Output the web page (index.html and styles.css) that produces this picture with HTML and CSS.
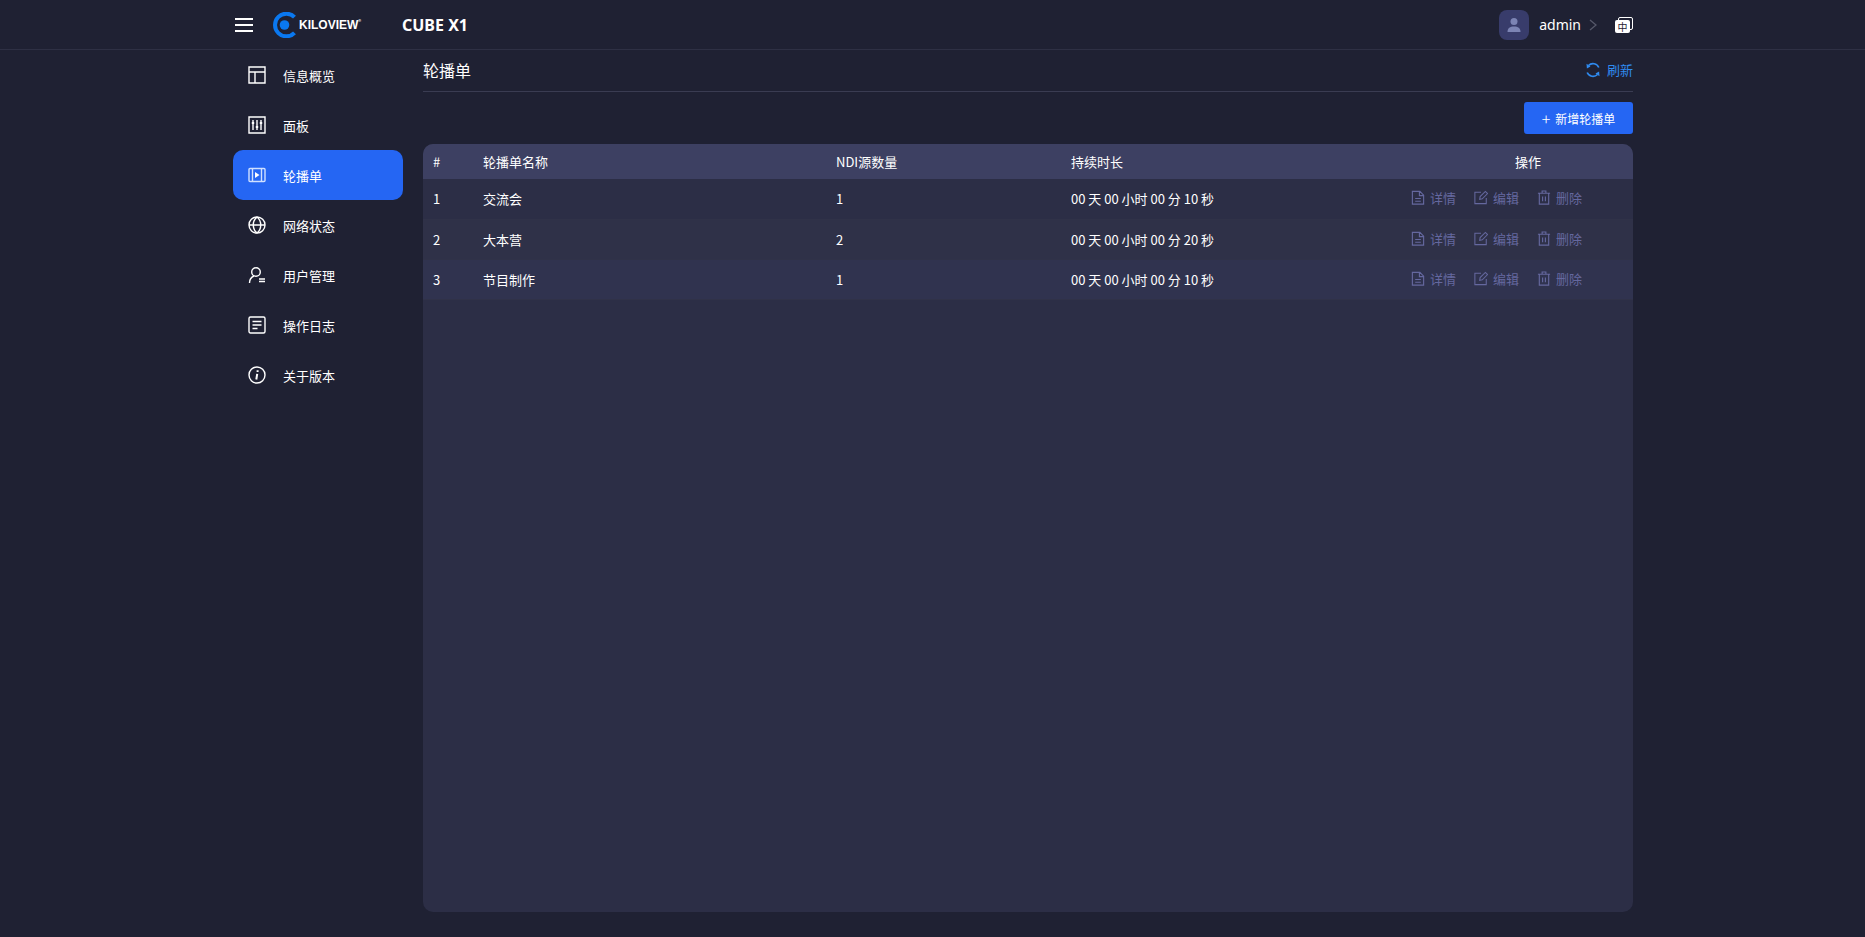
FILE: index.html
```html
<!DOCTYPE html>
<html lang="zh-CN">
<head>
    <meta charset="UTF-8">
    <title>CUBE X1</title>
    <link rel="stylesheet" href="styles.css">
</head>
<body>
    <header class="topbar">
        <div class="topbar-in">
            <svg class="burger" width="18" height="16" viewBox="0 0 18 16"><path d="M0 2h18M0 8h18M0 14h18" stroke="#fff" stroke-width="2.2"/></svg>
            <div class="logo">
                <svg width="26" height="26" viewBox="0 0 26 26"><path d="M23.5 5.2A11.3 11.3 0 1 0 23.5 20.8" fill="none" stroke="#0a78f0" stroke-width="4"/><circle cx="13.500" cy="13" r="4.800" fill="#0a78f0"/></svg>
                <span class="logo-text">KILOVIEW</span><span class="logo-r">®</span>
            </div>
            <span class="product">CUBE X1</span>
            <div class="user">
                <span class="avatar"><svg width="16" height="16" viewBox="0 0 16 16" fill="#7c84b4"><circle cx="8" cy="4.500" r="3.500"/><path d="M1.500 15c0-4 2.500-5.500 6.500-5.500s6.500 1.500 6.500 5.500z"/></svg></span>
                <span class="username">admin</span>
                <svg class="chev" width="8" height="12" viewBox="0 0 8 12"><path d="M1 1l6 5-6 5" fill="none" stroke="#56586a" stroke-width="1.300"/></svg>
                <span class="lang"><span class="lang-back"></span><span class="lang-front">中</span></span>
            </div>
        </div>
    </header>
    <div class="wrap">
        <nav class="side">
            <a class="nav-item">
                <svg class="nav-ico" viewBox="0 0 18 18"><path d="M1 1h16v16H1zM1 6h16M7 6v11"/></svg>信息概览
            </a>
            <a class="nav-item">
                <svg class="nav-ico" viewBox="0 0 18 18"><path d="M1 1h16v16H1zM5 4v10M9 4v10M13 4v10"/><path class="dot" d="M3.800 6h2.400v2H3.800zM7.800 10h2.400v2H7.800zM11.800 6h2.400v2h-2.400z"/></svg>面板
            </a>
            <a class="nav-item active">
                <svg class="nav-ico" viewBox="0 0 18 14"><path stroke="#cfe0ff" d="M1 1.500a1 1 0 0 1 1-1h14a1 1 0 0 1 1 1v11a1 1 0 0 1-1 1H2a1 1 0 0 1-1-1zM4.500 1v12M13.500 1v12"/><path class="dot" fill="#fff" d="M7 4l4.500 3L7 10z"/></svg>轮播单
            </a>
            <a class="nav-item">
                <svg class="nav-ico" viewBox="0 0 18 18"><circle cx="9" cy="9" r="8"/><path d="M1 9h16M9 1c-5 4-5 12 0 16M9 1c5 4 5 12 0 16"/></svg>网络状态
            </a>
            <a class="nav-item">
                <svg class="nav-ico" viewBox="0 0 18 18"><circle cx="8" cy="6" r="4.300"/><path d="M1.500 17c0-4 2-6 4.500-7M11 13h6M11 15.500h6"/></svg>用户管理
            </a>
            <a class="nav-item">
                <svg class="nav-ico" viewBox="0 0 18 18"><path d="M2.500 1h13A1.500 1.500 0 0 1 17 2.500v13a1.500 1.500 0 0 1-1.500 1.500h-13A1.500 1.500 0 0 1 1 15.500v-13A1.500 1.500 0 0 1 2.500 1zM4.500 5.500h9M4.500 9h9M4.500 12.500h5"/></svg>操作日志
            </a>
            <a class="nav-item">
                <svg class="nav-ico" viewBox="0 0 18 18"><circle cx="9" cy="9" r="8"/><path stroke-width="2" d="M9.600 4.300v1.600M9.200 7.800L8.300 13.500"/></svg>关于版本
            </a>
        </nav>
        <main class="main">
            <div class="title-row">
                <h1 class="title">轮播单</h1>
                <a class="refresh">
                    <svg width="16" height="16" viewBox="0 0 16 16" fill="none" stroke="#2f8bf0" stroke-width="1.700"><path d="M13.800 5.500A6.300 6.300 0 0 0 3.500 3.500M2.200 10.500A6.300 6.300 0 0 0 12.500 12.500"/><path fill="#2f8bf0" stroke="none" d="M1.500 1.800l4 2.600-3.600 2zM14.500 14.200l-4-2.600 3.600-2z"/></svg>
                    刷新
                </a>
            </div>
            <div class="tool-row">
                <button class="add-btn"><span class="plus">+</span>新增轮播单</button>
            </div>
            <div class="panel">
                <table class="list">
                    <thead>
                        <tr>
                            <th class="c-no">#</th>
                            <th class="c-name">轮播单名称</th>
                            <th class="c-num">NDI源数量</th>
                            <th class="c-time">持续时长</th>
                            <th class="c-op">操作</th>
                        </tr>
                    </thead>
                    <tbody>
                        <tr>
                            <td>1</td>
                            <td>交流会</td>
                            <td>1</td>
                            <td>00 天 00 小时 00 分 10 秒</td>
                            <td class="ops">
                                <a><svg class="op-ico" viewBox="0 0 14 16"><path d="M1 1.500h8l4 4v9.500H1zM8.500 1.500V6H13M4 9h6M4 12h6"/></svg>详情</a>
                                <a><svg class="op-ico" viewBox="0 0 16 16"><path d="M14 8.500V15H1V2h7M6.500 10l.5-3 6-6 2.500 2.500-6 6z"/></svg>编辑</a>
                                <a><svg class="op-ico" viewBox="0 0 14 16"><path d="M0.500 3.500h13M5 3.500V1h4v2.500M2 3.500V15h10V3.500M5.500 7v5M8.500 7v5"/></svg>删除</a>
                            </td>
                        </tr>
                        <tr>
                            <td>2</td>
                            <td>大本营</td>
                            <td>2</td>
                            <td>00 天 00 小时 00 分 20 秒</td>
                            <td class="ops">
                                <a><svg class="op-ico" viewBox="0 0 14 16"><path d="M1 1.500h8l4 4v9.500H1zM8.500 1.500V6H13M4 9h6M4 12h6"/></svg>详情</a>
                                <a><svg class="op-ico" viewBox="0 0 16 16"><path d="M14 8.500V15H1V2h7M6.500 10l.5-3 6-6 2.500 2.500-6 6z"/></svg>编辑</a>
                                <a><svg class="op-ico" viewBox="0 0 14 16"><path d="M0.500 3.500h13M5 3.500V1h4v2.500M2 3.500V15h10V3.500M5.500 7v5M8.500 7v5"/></svg>删除</a>
                            </td>
                        </tr>
                        <tr>
                            <td>3</td>
                            <td>节目制作</td>
                            <td>1</td>
                            <td>00 天 00 小时 00 分 10 秒</td>
                            <td class="ops">
                                <a><svg class="op-ico" viewBox="0 0 14 16"><path d="M1 1.500h8l4 4v9.500H1zM8.500 1.500V6H13M4 9h6M4 12h6"/></svg>详情</a>
                                <a><svg class="op-ico" viewBox="0 0 16 16"><path d="M14 8.500V15H1V2h7M6.500 10l.5-3 6-6 2.500 2.500-6 6z"/></svg>编辑</a>
                                <a><svg class="op-ico" viewBox="0 0 14 16"><path d="M0.500 3.500h13M5 3.500V1h4v2.500M2 3.500V15h10V3.500M5.500 7v5M8.500 7v5"/></svg>删除</a>
                            </td>
                        </tr>
                    </tbody>
                </table>
            </div>
        </main>
    </div>
</body>
</html>
```

FILE: styles.css
```css
* {
    box-sizing: border-box;
}
html, body {
    margin: 0;
    height: 100%;
}
body {
    background-color: #1f2133;
    color: #fff;
    font-family: "Noto Sans CJK SC", "Noto Sans", sans-serif;
    font-size: 14px;
    overflow: hidden;
}
.topbar {
    height: 50px;
    border-bottom: 1px solid #2e3044;
}
.topbar-in {
    width: 1400px;
    margin: 0 auto;
    padding-left: 235px;
    padding-right: 0;
    display: flex;
    align-items: center;
    height: 49px;
    width: 100%;
    padding-right: 232px;
}
.burger {
    margin-right: 18px;
}
.logo {
    display: flex;
    align-items: center;
    width: 131px;
}
.logo-text {
    font-family: "Liberation Sans", sans-serif;
    font-size: 12px;
    font-weight: 700;
    margin-left: 2px;
}
.logo-r {
    font-size: 6px;
    margin-bottom: 6px;
}
.product {
    font-family: "Noto Sans", sans-serif;
    font-size: 16px;
    font-weight: 700;
}
.user {
    margin-left: auto;
    display: flex;
    align-items: center;
}
.avatar {
    width: 30px;
    height: 30px;
    border-radius: 8px;
    background-color: #383c6b;
    display: flex;
    align-items: center;
    justify-content: center;
}
.username {
    font-family: "Noto Sans", sans-serif;
    font-size: 14px;
    margin-left: 10px;
}
.chev {
    margin-left: 8px;
}
.lang {
    position: relative;
    width: 18px;
    height: 16px;
    margin-left: 18px;
}
.lang-back {
    position: absolute;
    top: 0;
    right: 0;
    width: 15px;
    height: 13px;
    border: 1px solid #fff;
    border-radius: 2px;
}
.lang-front {
    position: absolute;
    left: 0;
    bottom: 0;
    width: 15px;
    height: 13px;
    background-color: #fff;
    border-radius: 2px;
    color: #1f2133;
    font-size: 10px;
    line-height: 13px;
    text-align: center;
}
.wrap {
    display: flex;
    padding-left: 233px;
    padding-right: 232px;
    height: 887px;
}
.side {
    width: 170px;
    flex: none;
}
.nav-item {
    display: flex;
    align-items: center;
    height: 50px;
    border-radius: 10px;
    padding-left: 15px;
    font-size: 13px;
}
.nav-item.active {
    background-color: #2566f3;
}
.nav-ico {
    width: 18px;
    height: 18px;
    margin-right: 17px;
    fill: none;
    stroke: #fff;
    stroke-width: 1.400;
}
.nav-ico .dot {
    fill: #fff;
    stroke: none;
}
.main {
    flex: 1;
    margin-left: 20px;
    display: flex;
    flex-direction: column;
    padding-bottom: 25px;
}
.title-row {
    height: 42px;
    border-bottom: 1px solid #3a3c52;
    display: flex;
    align-items: center;
    justify-content: space-between;
    padding-bottom: 2px;
}
.title {
    margin: 0;
    font-size: 16px;
    font-weight: 400;
}
.refresh {
    display: flex;
    align-items: center;
    gap: 6px;
    color: #2f8bf0;
    font-size: 13px;
}
.tool-row {
    display: flex;
    justify-content: flex-end;
    padding: 10px 0;
}
.add-btn {
    width: 109px;
    height: 32px;
    background-color: #2566f3;
    border: none;
    border-radius: 3px;
    color: #fff;
    font-family: inherit;
    font-size: 12px;
    padding: 0;
}
.plus {
    font-size: 16px;
    font-weight: 300;
    margin-right: 5px;
    vertical-align: -1px;
}
.panel {
    flex: 1;
    background-color: #2c2e46;
    border-radius: 10px;
    overflow: hidden;
}
.list {
    width: 100%;
    border-collapse: collapse;
    table-layout: fixed;
    font-size: 13px;
}
.list th {
    height: 35px;
    background-color: #3d4062;
    font-weight: 400;
    text-align: left;
    padding: 0 0 0 10px;
}
.list td {
    height: 40px;
    padding: 0 0 0 10px;
    border-bottom: 1px solid #303248;
}
.list tbody tr:nth-child(2) {
    background-color: #2f3148;
}
.list tbody tr:nth-child(3) {
    background-color: #30334f;
}
.c-no {
    width: 50px;
}
.c-name {
    width: 353px;
}
.c-num {
    width: 235px;
}
.c-time {
    width: 340px;
}
.list .c-op {
    text-align: center;
    padding: 0 0 0 22px;
}
.ops {
    white-space: nowrap;
}
.ops a {
    color: #65689f;
    display: inline-flex;
    align-items: center;
    margin-right: 15px;
}
.ops a:last-child {
    margin-right: 0;
}
.op-ico {
    width: 14px;
    height: 15px;
    margin-right: 5px;
    fill: none;
    stroke: #65689f;
    stroke-width: 1.200;
}
```
